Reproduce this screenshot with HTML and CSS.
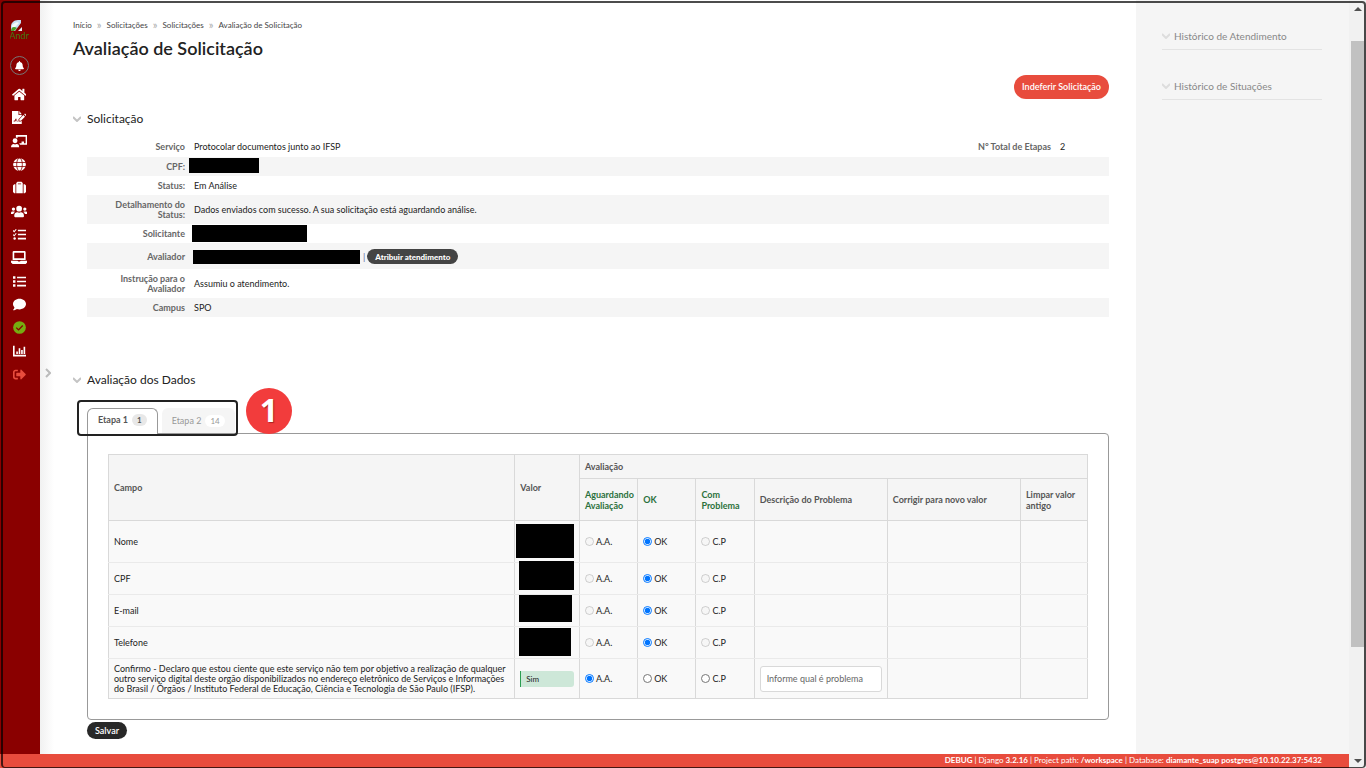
FILE: index.html
```html
<!DOCTYPE html>
<html lang="pt-br">
<head>
<meta charset="utf-8">
<title>Avaliação de Solicitação</title>
<meta name="viewport" content="width=device-width, initial-scale=1">
<link rel="stylesheet" href="styles.css">
</head>
<body>
<div class="page">
  <div class="content">
    <nav class="sidebar" aria-label="Menu">
      <a href="#" class="avatar" aria-label="Perfil">
        <svg width="12" height="12" viewBox="0 0 12 12"><path fill="#c5dcf2" d="M1 11V6C1 3 4 0 8 0h3v3L5 11z"/><path fill="#f4f7fa" d="M2 6c0-2 2-2 3-3s3-1 4 0L5 7H2z"/><path fill="#4aa02c" d="M1 11c0-4 3-5 6-3l-3 3z"/><path fill="#e8f0f8" d="M8 11l4-4v4z"/></svg>
        <span>Andr</span>
      </a>
      <a href="#" class="bell" aria-label="Notificações"><svg width="9" height="10" viewBox="0 0 448 512"><path d="M224 512c35.32 0 63.97-28.65 63.97-64H160.03c0 35.35 28.65 64 63.97 64zm215.39-149.71c-19.32-20.76-55.47-51.99-55.47-154.29 0-77.7-54.48-139.9-127.94-155.16V32c0-17.67-14.32-32-31.98-32s-31.98 14.33-31.98 32v20.84C118.56 68.1 64.08 130.3 64.08 208c0 102.3-36.15 133.53-55.47 154.29-6 6.45-8.66 14.16-8.61 21.71.11 16.4 12.98 32 32.1 32h383.8c19.12 0 32-15.6 32.1-32 .05-7.55-2.61-15.27-8.61-21.71z"/></svg></a>
      <div class="menu">
        <a href="#" aria-label="Início"><svg viewBox="0 0 576 512"><path d="M280.37 148.26L96 300.11V464a16 16 0 0 0 16 16l112.06-.29a16 16 0 0 0 15.92-16V368a16 16 0 0 1 16-16h64a16 16 0 0 1 16 16v95.64a16 16 0 0 0 16 16.05L464 480a16 16 0 0 0 16-16V300L295.67 148.26a12.19 12.19 0 0 0-15.3 0zM571.6 251.47L488 182.56V44.05a12 12 0 0 0-12-12h-56a12 12 0 0 0-12 12v72.61L318.47 43a48 48 0 0 0-61 0L4.34 251.47a12 12 0 0 0-1.6 16.9l25.5 31A12 12 0 0 0 45.15 301l235.22-193.74a12.19 12.19 0 0 1 15.3 0L530.9 301a12 12 0 0 0 16.9-1.6l25.5-31a12 12 0 0 0-1.7-16.93z"/></svg></a>
        <a href="#" aria-label="Documentos"><svg viewBox="0 0 18 16"><path fill-rule="evenodd" d="M0 0h8v5h4v1L8 10v3h3l1-1v4H0zM2 13h2l1-2 1 2h1v-1H6L5 9 3 12H2z"/><path d="M9 0l3 4H9zM9 10l5-5 2 2-5 5H9zM15 4l1-1 2 2-1 1z"/></svg></a>
        <a href="#" aria-label="Ensino"><svg viewBox="0 0 20 16"><path fill-rule="evenodd" d="M6 0h14v12h-9a6 6 0 0 0-1-2h3V8h3v2h2V2H8v2a4 4 0 0 0-2-1z"/><circle cx="5" cy="7" r="3"/><path d="M0 15c0-3 2-4 3-4l2 .6L7 11c2 0 3 1 3 4z"/></svg></a>
        <a href="#" aria-label="Internacional"><svg viewBox="0 0 16 16"><circle cx="8" cy="8" r="7.800"/><path fill="none" stroke="#8a0000" d="M0 5.500h16M0 10.500h16"/><ellipse fill="none" stroke="#8a0000" cx="8" cy="8" rx="3.500" ry="8"/></svg></a>
        <a href="#" aria-label="Gestão de pessoas"><svg viewBox="0 0 16 16"><path fill-rule="evenodd" d="M4 4V2.500L5.500 1h5L12 2.500V15H4zM6 4h4V3H6z"/><path d="M0 5.500L1.500 4H3v11H1.500L0 13.500zM13 4h1.500L16 5.500v8L14.500 15H13z"/></svg></a>
        <a href="#" aria-label="Comunidade"><svg viewBox="0 0 20 16"><circle cx="10" cy="4.500" r="3.500"/><path d="M4 14c0-4 2-5 4-5l2 .6 2-.6c2 0 4 1 4 5l-1 1H5z"/><circle cx="3" cy="5" r="2"/><circle cx="17" cy="5" r="2"/><path d="M0 10c0-2 1-2 2-2h2l1 .6C4 9 3 10 3 11H0zM20 10c0-2-1-2-2-2h-2l-1 .6c1 .4 2 1.400 2 2.400h3z"/></svg></a>
        <a href="#" aria-label="Tarefas"><svg viewBox="0 0 16 16"><path d="M6 2h10v2H6zM6 7h10v2H6zM6 12h10v2H6z"/><path fill="none" stroke="#fff" stroke-width="1.300" d="M0 3l1.500 1.500L4 1.500M0 8l1.500 1.500L4 6.500"/><circle cx="2" cy="13" r="1.500"/></svg></a>
        <a href="#" aria-label="Tecnologia"><svg viewBox="0 0 20 16"><path fill-rule="evenodd" d="M2 1l1-1h14l1 1v10H2zM4 2v7h12V2zM0 12h8l1 1h2l1-1h8v2l-2 2H2l-2-2z"/></svg></a>
        <a href="#" aria-label="Lista"><svg viewBox="0 0 16 16"><path d="M0 1.500h3v3H0zM0 6.500h3v3H0zM0 11.500h3v3H0zM5 2h11v2H5zM5 7h11v2H5zM5 12h11v2H5z"/></svg></a>
        <a href="#" aria-label="Comunicação"><svg viewBox="0 0 512 512"><path d="M256 32C114.600 32 0 125.100 0 240c0 49.600 21.400 95 57 130.700C44.500 421.100 2.700 466 2.200 466.500c-2.200 2.300-2.800 5.700-1.500 8.700S4.800 480 8 480c66.300 0 116-31.800 140.600-51.400 32.700 12.300 69 19.400 107.400 19.400 141.400 0 256-93.100 256-208S397.400 32 256 32z"/></svg></a>
        <a href="#" class="green" aria-label="Central de serviços"><svg viewBox="0 0 16 16"><circle cx="8" cy="8" r="7.800"/><path fill="none" stroke="#8a0000" stroke-width="1.600" d="M4 8.200l2.800 2.800L12 5.500"/></svg></a>
        <a href="#" aria-label="Relatórios"><svg viewBox="0 0 16 16"><path d="M0 1h2v11h14v2H0zM4 8h2v3H4zM7 4h2v7H7zM10 6h2v5h-2zM13 2h2v9h-2z"/></svg></a>
        <a href="#" class="red" aria-label="Sair"><svg viewBox="0 0 512 512"><path d="M497 273L329 441c-15 15-41 4.500-41-17v-96H152c-13.300 0-24-10.700-24-24v-96c0-13.300 10.700-24 24-24h136V88c0-21.400 25.900-32 41-17l168 168c9.300 9.400 9.300 24.600 0 34zM192 436v-40c0-6.600-5.400-12-12-12H96c-17.700 0-32-14.300-32-32V160c0-17.700 14.300-32 32-32h84c6.600 0 12-5.400 12-12V76c0-6.600-5.400-12-12-12H96c-53 0-96 43-96 96v192c0 53 43 96 96 96h84c6.600 0 12-5.400 12-12z"/></svg></a>
      </div>
    </nav>

    <main class="main">
      <button class="expand" type="button" aria-label="Expandir menu"><svg width="6" height="10" viewBox="0 0 6 10"><path d="M1 1l4 4-4 4"/></svg></button>
      <nav class="crumbs" aria-label="Trilha">
        <a href="#">Início</a><i>»</i><a href="#">Solicitações</a><i>»</i><a href="#">Solicitações</a><i>»</i><a href="#">Avaliação de Solicitação</a>
      </nav>
      <h1>Avaliação de Solicitação</h1>
      <div class="actions"><button class="danger" type="button">Indeferir Solicitação</button></div>

      <section class="request">
        <h2><svg class="chev" viewBox="0 0 8 6"><path d="M0 1l4 4 4-4"/></svg>Solicitação</h2>
        <dl class="details">
          <div class="row"><dt>Serviço</dt><dd>Protocolar documentos junto ao IFSP</dd><dt class="total">N° Total de Etapas</dt><dd class="count">2</dd></div>
          <div class="row"><dt>CPF:</dt><dd><span class="mask mask-cpf"></span></dd></div>
          <div class="row"><dt>Status:</dt><dd>Em Análise</dd></div>
          <div class="row"><dt>Detalhamento do Status:</dt><dd>Dados enviados com sucesso. A sua solicitação está aguardando análise.</dd></div>
          <div class="row"><dt>Solicitante</dt><dd><span class="mask mask-person"></span></dd></div>
          <div class="row tall"><dt>Avaliador</dt><dd class="reviewer"><span class="mask mask-reviewer"></span><span class="bar">|</span><button class="assign" type="button">Atribuir atendimento</button></dd></div>
          <div class="row"><dt>Instrução para o Avaliador</dt><dd>Assumiu o atendimento.</dd></div>
          <div class="row"><dt>Campus</dt><dd>SPO</dd></div>
        </dl>
      </section>

      <section class="review">
        <h2><svg class="chev" viewBox="0 0 8 6"><path d="M0 1l4 4 4-4"/></svg>Avaliação dos Dados</h2>
        <div class="tabs">
          <button class="tab active" type="button">Etapa 1 <span>1</span></button>
          <button class="tab" type="button">Etapa 2 <span>14</span></button>
          <div class="callout"></div>
          <div class="step">1</div>
        </div>
        <form class="panel" id="review-form">
          <table>
            <colgroup><col class="c-field"><col class="c-value"><col class="c-opt"><col class="c-opt"><col class="c-opt"><col class="c-text"><col class="c-text"><col class="c-clear"></colgroup>
            <thead>
              <tr class="h-top"><th rowspan="2">Campo</th><th rowspan="2">Valor</th><th colspan="6">Avaliação</th></tr>
              <tr class="h-sub"><th><a href="#">Aguardando Avaliação</a></th><th><a href="#">OK</a></th><th><a href="#">Com Problema</a></th><th>Descrição do Problema</th><th>Corrigir para novo valor</th><th>Limpar valor antigo</th></tr>
            </thead>
            <tbody>
              <tr class="r-first"><td>Nome</td><td class="val"><span class="mask m1"></span></td><td><label><input type="radio" name="f1" disabled>A.A.</label></td><td><label><input type="radio" name="f1" checked>OK</label></td><td><label><input type="radio" name="f1" disabled>C.P</label></td><td></td><td></td><td></td></tr>
              <tr><td>CPF</td><td class="val"><span class="mask m2"></span></td><td><label><input type="radio" name="f2" disabled>A.A.</label></td><td><label><input type="radio" name="f2" checked>OK</label></td><td><label><input type="radio" name="f2" disabled>C.P</label></td><td></td><td></td><td></td></tr>
              <tr><td>E-mail</td><td class="val"><span class="mask m3"></span></td><td><label><input type="radio" name="f3" disabled>A.A.</label></td><td><label><input type="radio" name="f3" checked>OK</label></td><td><label><input type="radio" name="f3" disabled>C.P</label></td><td></td><td></td><td></td></tr>
              <tr><td>Telefone</td><td class="val"><span class="mask m4"></span></td><td><label><input type="radio" name="f4" disabled>A.A.</label></td><td><label><input type="radio" name="f4" checked>OK</label></td><td><label><input type="radio" name="f4" disabled>C.P</label></td><td></td><td></td><td></td></tr>
              <tr class="r-last"><td>Confirmo - Declaro que estou ciente que este serviço não tem por objetivo a realização de qualquer outro serviço digital deste orgão disponibilizados no endereço eletrônico de Serviços e Informações do Brasil / Órgãos / Instituto Federal de Educação, Ciência e Tecnologia de São Paulo (IFSP).</td><td><span class="yes">Sim</span></td><td><label><input type="radio" name="f5" checked>A.A.</label></td><td><label><input type="radio" name="f5">OK</label></td><td><label><input type="radio" name="f5">C.P</label></td><td><input class="text" type="text" placeholder="Informe qual é problema" aria-label="Descrição do Problema"></td><td></td><td></td></tr>
            </tbody>
          </table>
        </form>
        <button class="save" type="submit" form="review-form">Salvar</button>
      </section>
    </main>

    <aside class="aside">
      <h3><svg class="chev" viewBox="0 0 8 6"><path d="M0 1l4 4 4-4"/></svg>Histórico de Atendimento</h3>
      <h3><svg class="chev" viewBox="0 0 8 6"><path d="M0 1l4 4 4-4"/></svg>Histórico de Situações</h3>
    </aside>
  </div>
  <footer class="debug"><p><b>DEBUG</b> | Django <b>3.2.16</b> | Project path: <b>/workspace</b> | Database: <b>diamante_suap postgres@10.10.22.37:5432</b></p></footer>
  <div class="scroll" aria-hidden="true"><i class="up"></i><div class="track"><div class="thumb"></div></div><i class="down"></i></div>
</div>
<div class="frame"></div>
</body>
</html>
```
FILE: styles.css
```css
* { box-sizing: border-box; }
body {
  margin: 0;
  font-family: Lato, "Open Sans", sans-serif;
  font-size: 9px;
  line-height: 10px;
  color: #222;
  background: #fff;
}
button, input { font-family: inherit; font-size: inherit; line-height: inherit; }
button { border: 0; cursor: pointer; white-space: nowrap; }
a { color: inherit; text-decoration: none; }
h1, h2, h3, p, dl, dd { margin: 0; }

.page {
  display: grid;
  grid-template: 1fr 14px / 1fr 17px;
  min-height: 100vh;
}
.content { display: flex; }

/* Sidebar */
.sidebar {
  flex: 0 0 40px;
  display: flex;
  flex-direction: column;
  align-items: center;
  padding: 20px 2px 0 0;
  background: #8a0000;
}
.avatar {
  width: 19px;
  height: 20px;
  overflow: hidden;
  font-size: 9px;
  line-height: 8px;
  color: #3c7a12;
}
.avatar svg, .avatar span { display: block; }
.bell {
  display: flex;
  align-items: center;
  justify-content: center;
  width: 19px;
  height: 19px;
  margin-top: 16px;
  border: 1px solid #777;
  border-radius: 50%;
}
.sidebar svg { fill: #fff; }
.menu {
  display: flex;
  flex-direction: column;
  justify-content: space-between;
  min-height: 293px;
  margin-top: 13px;
}
.menu a { display: flex; justify-content: center; }
.menu svg { height: 13px; max-width: 17px; }
.menu .green svg { fill: #76ac11; }
.menu .red svg { fill: #e84c3d; }

/* Main column */
.main {
  position: relative;
  flex: 1;
  min-width: 0;
  padding: 20px 27px 14px 33px;
  background: linear-gradient(90deg, #f1f1f1, #fff 14px);
}
.expand {
  position: absolute;
  left: 5px;
  top: 368px;
  padding: 0;
  background: none;
}
.expand svg { display: block; fill: none; stroke: #bbb; stroke-width: 2; }
.crumbs { display: flex; gap: 5px; font-size: 8px; color: #444; }
.crumbs i { font-style: normal; font-size: 11px; line-height: 9px; color: #aaa; }
h1 { margin-top: 7px; font-size: 18px; line-height: 22px; font-weight: 600; }
.actions { display: flex; justify-content: flex-end; margin-top: 16px; }
.danger {
  height: 24px;
  padding: 0 8px;
  border-radius: 12px;
  background: #e84c3d;
  color: #fff;
  font-weight: 600;
}
h2 {
  display: flex;
  align-items: center;
  gap: 6px;
  font-size: 12px;
  line-height: 16px;
  font-weight: 400;
}
.chev { width: 8px; height: 6px; fill: none; stroke: #c4c4c4; stroke-width: 2; }
.request { margin-top: 12px; }
.details { margin: 10px 0 0 14px; }
.row { display: flex; align-items: center; min-height: 19px; padding: 5px 0 4px; }
.row:nth-child(even) { background: #f5f5f5; }
.row:first-child { padding-bottom: 5px; }
.row dt { width: 98px; padding-left: 20px; text-align: right; font-weight: 700; color: #666; }
.row dd { position: relative; flex: 1; min-height: 9px; padding-left: 9px; }
.row .total { width: 120px; }
.row .count { flex: 0 0 58px; }
.row.tall { min-height: 26px; }
.mask { position: absolute; background: #000; }
.mask-cpf { left: 4px; top: -5px; width: 70px; height: 15px; }
.mask-person { left: 7px; top: -5px; width: 115px; height: 17px; }
.mask-reviewer { left: 8px; top: 1px; width: 167px; height: 14px; }
.row .reviewer { display: flex; align-items: center; gap: 2px; padding-left: 178px; }
.bar { color: #5b5b9a; }
.assign {
  height: 15px;
  padding: 0 8px;
  border-radius: 8px;
  background: #444;
  color: #fff;
  font-size: 8px;
  font-weight: 900;
}

/* Review */
.review { margin-top: 55px; }
.tabs { position: relative; display: flex; gap: 4px; margin: 20px 0 0 14px; }
.tab {
  display: flex;
  align-items: center;
  gap: 4px;
  height: 25px;
  padding: 0 9px 1px;
  border: 1px solid #f5f5f5;
  border-bottom: 0;
  border-radius: 6px 6px 0 0;
  background: #f5f5f5;
  color: #999;
}
.tab span { padding: 1px 5px; border-radius: 6px; background: #fff; font-size: 8px; }
.tab.active {
  position: relative;
  z-index: 1;
  height: 26px;
  margin-bottom: -1px;
  padding: 0 10px 3px;
  border-color: #999;
  background: #fff;
  color: #555;
  font-weight: 700;
}
.tab.active span { background: #e8e8e8; }
.callout {
  position: absolute;
  z-index: 2;
  left: -10px;
  top: -8px;
  width: 161px;
  height: 36px;
  border: 2px solid #222;
  border-radius: 4px;
}
.step {
  position: absolute;
  z-index: 2;
  left: 159px;
  top: -20px;
  width: 46px;
  height: 46px;
  border-radius: 50%;
  background: #f23c3c;
  color: #fff;
  font-family: "Open Sans", sans-serif;
  font-size: 32px;
  line-height: 44px;
  font-weight: 700;
  text-align: center;
  text-shadow: 1px 1px 1px #a22;
}
.panel {
  margin-left: 14px;
  padding: 20px;
  border: 1px solid #999;
  border-radius: 0 4px 4px 4px;
}
table { width: 100%; border-collapse: collapse; table-layout: fixed; background: #f9f9f9; }
.c-field { width: 41.500%; }
.c-value { width: 6.600%; }
.c-opt { width: 5.950%; }
.c-text { width: 13.600%; }
.c-clear { width: 6.850%; }
th, td { padding: 4px 5px; border: 1px solid #d9d9d9; text-align: left; vertical-align: middle; }
th { background: #f5f5f5; color: #555; font-weight: 700; line-height: 11px; }
th a { color: #2b713c; }
td { border-top-color: #eaeaea; border-bottom-color: #eaeaea; }
.r-first td { border-top-color: #d9d9d9; }
.r-last td { border-bottom-color: #d9d9d9; }
.h-top { height: 24px; }
.h-sub, .r-first { height: 42px; }
tbody tr { height: 32px; }
.r-last { height: 40px; }
label { display: flex; align-items: center; gap: 2px; }
input[type="radio"] { width: 9px; height: 9px; margin: 0; }
.val { position: relative; }
.m1 { left: 1px; top: 3px; width: 58px; height: 34px; }
.m2 { left: 4px; top: -2px; width: 55px; height: 29px; }
.m3 { left: 4px; top: 0; width: 53px; height: 27px; }
.m4 { left: 4px; top: 1px; width: 52px; height: 28px; }
.yes {
  display: block;
  padding: 3px 5px;
  border-left: 1px solid #2a9d50;
  border-radius: 0 3px 3px 0;
  background: #cde7d8;
  font-size: 8px;
}
.text {
  display: block;
  width: 100%;
  height: 26px;
  padding: 0 6px;
  border: 1px solid #d9d9d9;
  border-radius: 3px;
  background: #fff;
}
.text::placeholder { color: #666; }
.save {
  display: block;
  height: 17px;
  margin: 2px 0 0 14px;
  padding: 0 8px;
  border-radius: 9px;
  background: #282828;
  color: #fff;
  font-weight: 600;
}

/* History column */
.aside { flex: 0 0 213px; padding: 27px 27px 0 26px; background: #f5f5f5; }
h3 {
  display: flex;
  align-items: center;
  gap: 4px;
  height: 23px;
  margin-bottom: 27px;
  padding-bottom: 4px;
  border-bottom: 1px solid #e3e3e3;
  font-size: 10px;
  font-weight: 400;
  color: #888;
}
.aside .chev { stroke: #ddd; }

/* Footer and scroll bar */
.debug {
  grid-row: 2;
  padding-right: 27px;
  background: #e84c3d;
  color: #fff;
  font-size: 8px;
  line-height: 12px;
  text-align: right;
}
.debug b { font-weight: 700; }
.scroll {
  grid-area: 1 / 2 / 3 / 3;
  display: flex;
  flex-direction: column;
  align-items: center;
  gap: 5px;
  padding: 7px 2px 5px;
  background: #f1f1f1;
}
.track { flex: 1; width: 100%; padding-top: 25px; }
.thumb { height: 85%; background: #c1c1c1; }
.up, .down { border: 4px solid transparent; }
.up { border-top: 0; border-bottom-color: #505050; }
.down { border-bottom: 0; border-top-color: #505050; }
.frame {
  position: fixed;
  z-index: 5;
  inset: 1px 0 0 1px;
  border: 2px solid rgba(0, 0, 0, 0.700);
  border-bottom-width: 1px;
  border-radius: 4px;
  pointer-events: none;
}
```
